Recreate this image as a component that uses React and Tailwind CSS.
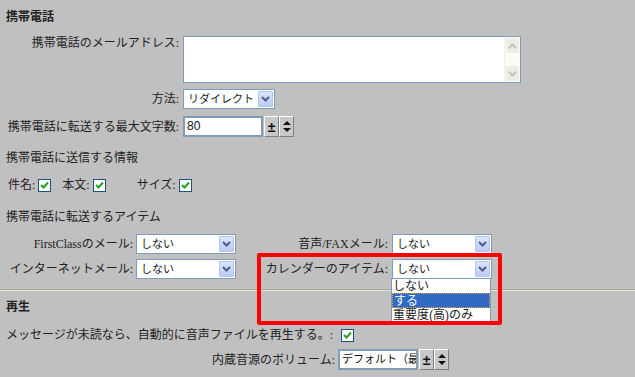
import React from "react";

const LBL = "font-['Liberation_Serif','Noto_Sans_CJK_JP',serif]";
const SANS = "font-['Liberation_Sans','Noto_Sans_CJK_JP',sans-serif]";

function Chevron() {
  return (
    <svg width="9" height="6" viewBox="0 0 9 6">
      <path d="M1 1 L4.5 4.5 L8 1" fill="none" stroke="#4d6185" strokeWidth="2" />
    </svg>
  );
}

function Select({ value, w = "w-[100px]" }) {
  return (
    <div className={`flex h-[20px] ${w} items-center overflow-hidden border border-[#7f9db9] bg-white`}>
      <span className={`min-w-0 flex-1 overflow-hidden whitespace-nowrap pl-[4px] text-[11px] leading-[18px] text-[#222] ${SANS}`}>{value}</span>
      <div className="mr-[1px] flex h-[16px] w-[15px] shrink-0 items-center justify-center rounded-[1px] border border-[#b4c6ef] bg-gradient-to-b from-[#dbe5fd] to-[#b9cbf6]">
        <Chevron />
      </div>
    </div>
  );
}

function Check() {
  return (
    <div className="flex h-[13px] w-[13px] items-center justify-center border border-[#1c5180] bg-white">
      <svg width="9" height="8" viewBox="0 0 9 8">
        <path d="M1 4 L3.5 6.5 L8 1.5" fill="none" stroke="#21a121" strokeWidth="2" />
      </svg>
    </div>
  );
}

function Spin() {
  return (
    <div className="flex">
      <div className="ml-[1px] flex h-[21px] w-[15px] items-center justify-center border-l border-t border-l-white border-t-white border-r border-b border-r-[#808080] border-b-[#808080] bg-[#c8c8c8]">
        <span className={`text-[14px] font-bold leading-none text-[#111] ${SANS}`}>±</span>
      </div>
      <div className="flex h-[21px] w-[15px] items-center justify-center border-l border-t border-l-white border-t-white border-r border-b border-r-[#808080] border-b-[#808080] bg-[#c8c8c8]">
        <svg width="8" height="11" viewBox="0 0 8 11">
          <path d="M4 0 L8 4 L0 4 Z M0 7 L8 7 L4 11 Z" fill="#111" />
        </svg>
      </div>
    </div>
  );
}

function Input({ value, small }) {
  return (
    <div className="flex h-[21px] w-[80px] items-center overflow-hidden border-2 border-[#7f9db9] bg-white">
      <span className={`whitespace-nowrap pl-[2px] ${small ? "text-[11px]" : "text-[12px]"} leading-[17px] text-[#111] ${SANS}`}>{value}</span>
    </div>
  );
}

export default function App() {
  const txt = `text-[12px] leading-[18px] text-[#222] ${LBL}`;
  return (
    <div className="relative h-[377px] w-[635px] overflow-hidden bg-[#c0c0c0]">
      <div className="flex flex-col">
        <div className={`mt-[8px] h-[18px] pl-[6px] font-bold ${txt}`}>携帯電話</div>

        <div className="mt-[10px] flex items-start">
          <div className={`-mt-[2px] w-[179px] text-right ${txt}`}>携帯電話のメールアドレス:</div>
          <div className="ml-[4px] flex h-[47px] w-[338px] border border-[#7f9db9] bg-white">
            <div className="flex-1" />
            <div className="flex w-[16px] flex-col justify-between border-l border-[#f0efe8] bg-[#fbfbf8] p-[1px]">
              <div className="flex h-[15px] items-center justify-center rounded-[2px] bg-[#eeede5]">
                <svg width="9" height="6" viewBox="0 0 9 6"><path d="M1 5 L4.5 1.5 L8 5" fill="none" stroke="#c2c2ba" strokeWidth="2" /></svg>
              </div>
              <div className="flex h-[15px] items-center justify-center rounded-[2px] bg-[#eeede5]">
                <svg width="9" height="6" viewBox="0 0 9 6"><path d="M1 1 L4.5 4.5 L8 1" fill="none" stroke="#c2c2ba" strokeWidth="2" /></svg>
              </div>
            </div>
          </div>
        </div>

        <div className="mt-[6px] flex items-center">
          <div className={`w-[179px] text-right ${txt}`}>方法:</div>
          <div className="ml-[4px]">
            <Select value="リダイレクト" w="w-[92px]" />
          </div>
        </div>

        <div className="mt-[7px] flex items-center">
          <div className={`w-[179px] text-right ${txt}`}>携帯電話に転送する最大文字数:</div>
          <div className="ml-[4px] flex">
            <Input value="80" />
            <Spin />
          </div>
        </div>

        <div className={`mt-[12px] h-[18px] pl-[6px] ${txt}`}>携帯電話に送信する情報</div>

        <div className="mt-[9px] flex h-[18px] items-center pl-[8px]">
          <span className={txt}>件名:</span>
          <div className="ml-[3px]"><Check /></div>
          <span className={`ml-[11px] ${txt}`}>本文:</span>
          <div className="ml-[3px]"><Check /></div>
          <span className={`ml-[31px] ${txt}`}>サイズ:</span>
          <div className="ml-[3px]"><Check /></div>
        </div>

        <div className={`mt-[14px] h-[18px] pl-[6px] ${txt}`}>携帯電話に転送するアイテム</div>

        <div className="mt-[8px] flex items-center">
          <div className={`w-[133px] text-right ${txt}`}>FirstClassのメール:</div>
          <div className="ml-[3px]"><Select value="しない" /></div>
          <div className={`w-[152px] text-right ${txt}`}>音声/FAXメール:</div>
          <div className="ml-[4px]"><Select value="しない" /></div>
        </div>

        <div className="mt-[5px] flex items-center">
          <div className={`w-[133px] text-right ${txt}`}>インターネットメール:</div>
          <div className="ml-[3px]"><Select value="しない" /></div>
          <div className={`w-[152px] text-right ${txt}`}>カレンダーのアイテム:</div>
          <div className="ml-[4px]"><Select value="しない" /></div>
        </div>

        <div className="mt-[10px] h-[2px] border-t border-b border-t-[#a6a399] border-b-[#e6e2d6]" />

        <div className={`mt-[7px] h-[18px] pl-[6px] font-bold ${txt}`}>再生</div>

        <div className="mt-[10px] flex h-[18px] items-center">
          <div className={`w-[335px] pl-[6px] ${txt}`}>メッセージが未読なら、自動的に音声ファイルを再生する。:</div>
          <div className="ml-[6px]"><Check /></div>
        </div>

        <div className="mt-[5px] flex items-center">
          <div className={`w-[335px] text-right ${txt}`}>内蔵音源のボリューム:</div>
          <div className="ml-[3px] flex">
            <Input value="デフォルト（最大）" small />
            <Spin />
          </div>
        </div>
      </div>

      {/* dropdown list */}
      <div className={`absolute left-[391px] top-[278px] w-[100px] border border-[#7f9db9] bg-white text-[12px] leading-[14px] text-[#222] ${SANS}`}>
        <div className="h-[14px] pl-[1px]">しない</div>
        <div className="h-[15px] border border-dotted border-[#e8a33c] bg-[#316ac5] pl-[1px] text-white">する</div>
        <div className="h-[14px] pl-[1px]">重要度(高)のみ</div>
      </div>

      {/* red annotation */}
      <div className="pointer-events-none absolute left-[257px] top-[253px] h-[72px] w-[245px] rounded-[2px] border-[4px] border-[#ff0000]" />
    </div>
  );
}
